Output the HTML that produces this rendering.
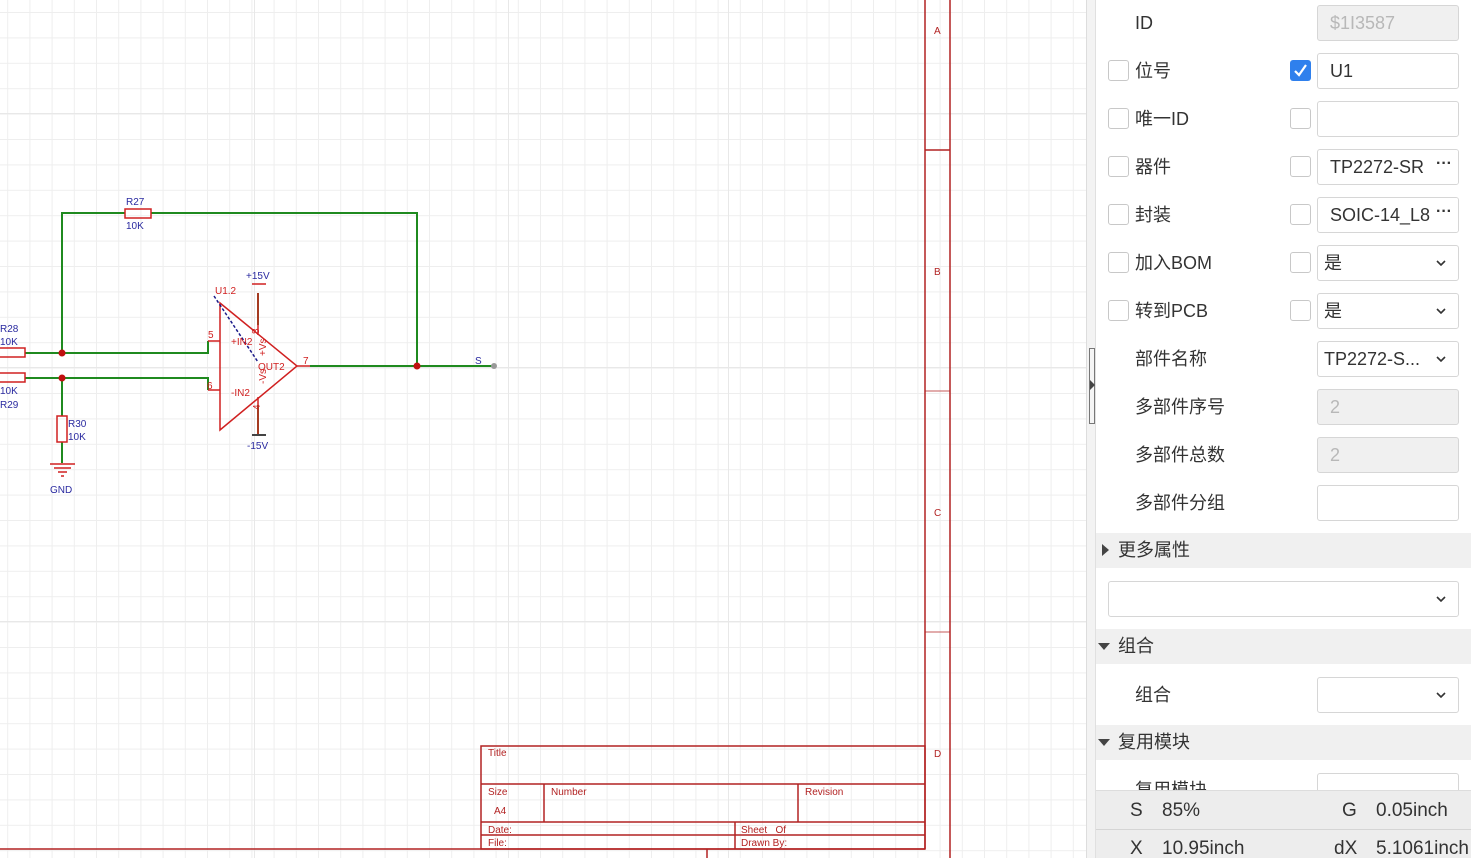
<!DOCTYPE html>
<html><head><meta charset="utf-8"><style>
*{margin:0;padding:0;box-sizing:border-box}
body{width:1471px;height:858px;overflow:hidden;position:relative;background:#fff;font-family:"Liberation Sans","Noto Sans CJK SC",sans-serif;color:#333}
.a{position:absolute}
.lbl{position:absolute;left:1135px;font-size:18px;line-height:24px;color:#333}
.cb{position:absolute;width:21px;height:21px;border:1px solid #c8c8c8;border-radius:3px;background:#fff}
.in{position:absolute;left:1317px;width:142px;height:36px;border:1px solid #d6d6d6;border-radius:3px;background:#fff;font-size:18px;line-height:34px;padding-left:12px;color:#333;white-space:nowrap;overflow:hidden}
.dis{background:#f0f0f0;color:#b8b8b8}
.chev{position:absolute;right:12px;top:14px;width:10px;height:6px}
.dots{position:absolute;right:0;top:0;width:28px;height:34px;background:#fff;font-size:16px;font-weight:bold;text-align:center;line-height:28px}
.band{position:absolute;left:1096px;width:375px;height:35px;background:#f0f0f0;font-size:18px;line-height:35px;padding-left:22px}
.tri{position:absolute;left:6px;top:12px;width:0;height:0}
.tr{border-top:6px solid transparent;border-bottom:6px solid transparent;border-left:7px solid #444;left:6px;top:11px}
.td{border-left:6px solid transparent;border-right:6px solid transparent;border-top:7px solid #444;left:2px;top:14px}
</style></head><body>
<svg width="0" height="0" style="position:absolute"><defs><symbol id="cv" viewBox="0 0 10 6"><path d="M1 1L5 5L9 1" stroke="#333" stroke-width="1.6" fill="none"/></symbol></defs></svg>
<svg class="a" style="left:0;top:0" width="1086" height="858" xmlns="http://www.w3.org/2000/svg" font-family="Liberation Sans, sans-serif">
<defs>
<pattern id="g" x="-15" y="12" width="22.2" height="25.4" patternUnits="userSpaceOnUse">
<path d="M0.5 0V25.4M0 0.5H22.2" stroke="#eeeeee" stroke-width="1" fill="none"/>
</pattern>
</defs>
<rect width="1086" height="858" fill="#fff"/>
<rect width="1086" height="858" fill="url(#g)"/>
<g stroke="#e8e8e8" stroke-width="1">
<line x1="254.5" y1="0" x2="254.5" y2="858"/><line x1="508.5" y1="0" x2="508.5" y2="858"/><line x1="728.5" y1="0" x2="728.5" y2="858"/>
<line x1="0" y1="113.5" x2="1086" y2="113.5"/><line x1="0" y1="367.5" x2="1086" y2="367.5"/><line x1="0" y1="621.5" x2="1086" y2="621.5"/>
</g>
<g stroke="#b22222" stroke-width="1.5" fill="none">
<line x1="925" y1="0" x2="925" y2="849"/><line x1="950" y1="0" x2="950" y2="858"/>
<line x1="925" y1="150" x2="950" y2="150"/><line x1="925" y1="391" x2="950" y2="391" stroke-width="0.8"/><line x1="925" y1="632" x2="950" y2="632" stroke-width="0.8"/>
<rect x="481" y="746" width="444" height="103"/>
<line x1="481" y1="784" x2="925" y2="784"/><line x1="481" y1="822" x2="925" y2="822"/><line x1="481" y1="835" x2="925" y2="835"/>
<line x1="544" y1="784" x2="544" y2="822"/><line x1="798" y1="784" x2="798" y2="822"/><line x1="735" y1="822" x2="735" y2="849"/>
<line x1="0" y1="849" x2="925" y2="849"/><line x1="707" y1="849" x2="707" y2="858"/>
</g>
<g fill="#b22222" font-size="10">
<text x="934" y="34">A</text><text x="934" y="275">B</text><text x="934" y="516">C</text><text x="934" y="757">D</text>
<text x="488" y="756">Title</text><text x="488" y="795">Size</text><text x="494" y="814">A4</text><text x="551" y="795">Number</text><text x="805" y="795">Revision</text>
<text x="488" y="833">Date:</text><text x="488" y="846">File:</text><text x="741" y="833">Sheet&#160;&#160;&#160;Of</text><text x="741" y="846">Drawn By:</text>
</g>
<g stroke="#1f8a1f" stroke-width="2" fill="none">
<polyline points="62,353 62,213 125,213"/><polyline points="151,213 417,213 417,366"/>
<polyline points="25,353 208,353 208,341"/><polyline points="25,378 208,378 208,390"/>
<line x1="62" y1="378" x2="62" y2="416"/><line x1="62" y1="442" x2="62" y2="463"/>
<line x1="310" y1="366" x2="493" y2="366"/>
<line x1="258" y1="293" x2="258" y2="325"/><line x1="258" y1="405" x2="258" y2="434"/>
</g>
<g stroke="#d02020" stroke-width="1.5" fill="none">
<rect x="125" y="209" width="26" height="9"/>
<rect x="-5" y="348" width="30" height="9"/><rect x="-5" y="373" width="30" height="9"/>
<rect x="57" y="416" width="10" height="26"/>
<polygon points="220,303 220,430 297,366"/>
<line x1="208" y1="341" x2="220" y2="341"/><line x1="208" y1="390" x2="220" y2="390"/>
<line x1="297" y1="366" x2="310" y2="366"/>
<line x1="258" y1="293" x2="258" y2="335"/><line x1="258" y1="397" x2="258" y2="434"/>
<line x1="252" y1="284" x2="266" y2="284"/>
</g>
<line x1="252" y1="435" x2="266" y2="435" stroke="#444" stroke-width="2"/>
<g stroke="#d02020" stroke-width="1.5"><line x1="50" y1="464" x2="75" y2="464"/><line x1="54" y1="468" x2="71" y2="468"/><line x1="58" y1="472" x2="67" y2="472"/><line x1="61" y1="476" x2="64" y2="476"/></g>
<line x1="214" y1="296" x2="258" y2="362" stroke="#1a1a8a" stroke-width="1.5" stroke-dasharray="3,2"/>
<g fill="#c01010"><circle cx="62" cy="353" r="3.5"/><circle cx="62" cy="378" r="3.5"/><circle cx="417" cy="366" r="3.5"/></g>
<circle cx="494" cy="366" r="3" fill="#999"/>
<g fill="#2a2aa0" font-size="10">
<text x="126" y="205">R27</text><text x="126" y="229">10K</text>
<text x="0" y="332">R28</text><text x="0" y="345">10K</text><text x="0" y="394">10K</text><text x="0" y="408">R29</text>
<text x="68" y="427">R30</text><text x="68" y="440">10K</text><text x="50" y="493">GND</text>
<text x="246" y="279">+15V</text><text x="247" y="449">-15V</text><text x="475" y="364">S</text>
</g>
<g fill="#d02020" font-size="10">
<text x="215" y="294">U1.2</text><text x="208" y="338">5</text><text x="207" y="389">6</text><text x="303" y="364">7</text>
<text x="231" y="345">+IN2</text><text x="231" y="396">-IN2</text><text x="258" y="370">OUT2</text>
<text x="252" y="333" transform="rotate(-90 256 330)">8</text><text x="252" y="410" transform="rotate(-90 256 406)">4</text>
<text x="262" y="360" transform="rotate(-90 262 356)">+Vs</text><text x="262" y="388" transform="rotate(-90 262 384)">-Vs</text>
</g>
</svg>
<div class="a" style="left:1086px;top:0;width:10px;height:858px;background:#f3f3f3;border-left:1px solid #ddd;border-right:1px solid #e0e0e0"></div>
<div class="a" style="left:1089px;top:348px;width:6px;height:76px;border:1px solid #777;background:#f5f5f5"></div>
<div class="a" style="left:1090px;top:380px;width:0;height:0;border-top:5px solid transparent;border-bottom:5px solid transparent;border-left:5px solid #444"></div>
<div class="a" style="left:1096px;top:0;width:375px;height:858px;background:#fff"></div>
<div class="lbl" style="top:11px">ID</div><div class="in dis" style="top:5px">$1I3587</div>
<div class="cb" style="left:1108px;top:60px"></div><div class="lbl" style="top:59px">位号</div>
<div class="a" style="left:1290px;top:60px;width:21px;height:21px;border-radius:3px;background:#2f80ed"><svg width="21" height="21"><path d="M5 11L9 15L16 5" stroke="#fff" stroke-width="2.2" fill="none"/></svg></div><div class="in" style="top:53px">U1</div>
<div class="cb" style="left:1108px;top:108px"></div><div class="lbl" style="top:107px">唯一ID</div><div class="cb" style="left:1290px;top:108px"></div><div class="in" style="top:101px"></div>
<div class="cb" style="left:1108px;top:156px"></div><div class="lbl" style="top:155px">器件</div><div class="cb" style="left:1290px;top:156px"></div><div class="in" style="top:149px">TP2272-SR<span class="dots">···</span></div>
<div class="cb" style="left:1108px;top:204px"></div><div class="lbl" style="top:203px">封装</div><div class="cb" style="left:1290px;top:204px"></div><div class="in" style="top:197px">SOIC-14_L8<span class="dots">···</span></div>
<div class="cb" style="left:1108px;top:252px"></div><div class="lbl" style="top:251px">加入BOM</div><div class="cb" style="left:1290px;top:252px"></div><div class="in" style="top:245px;padding-left:6px">是<svg class="chev"><use href="#cv"/></svg></div>
<div class="cb" style="left:1108px;top:300px"></div><div class="lbl" style="top:299px">转到PCB</div><div class="cb" style="left:1290px;top:300px"></div><div class="in" style="top:293px;padding-left:6px">是<svg class="chev"><use href="#cv"/></svg></div>
<div class="lbl" style="top:347px">部件名称</div><div class="in" style="top:341px;padding-left:6px">TP2272-S...<svg class="chev"><use href="#cv"/></svg></div>
<div class="lbl" style="top:395px">多部件序号</div><div class="in dis" style="top:389px">2</div>
<div class="lbl" style="top:443px">多部件总数</div><div class="in dis" style="top:437px">2</div>
<div class="lbl" style="top:491px">多部件分组</div><div class="in" style="top:485px"></div>
<div class="band" style="top:533px"><span class="a tr"></span>更多属性</div>
<div class="in" style="left:1108px;width:351px;top:581px"><svg class="chev"><use href="#cv"/></svg></div>
<div class="band" style="top:629px"><span class="a td"></span>组合</div>
<div class="lbl" style="top:683px">组合</div><div class="in" style="top:677px"><svg class="chev"><use href="#cv"/></svg></div>
<div class="band" style="top:725px"><span class="a td"></span>复用模块</div>
<div class="lbl" style="top:778px">复用模块</div><div class="in" style="top:773px"></div>
<div class="a" style="left:1096px;top:790px;width:375px;height:68px;background:#ededed;border-top:1px solid #ddd;font-size:19px;color:#333">
<div class="a" style="left:0;top:38px;width:375px;height:1px;background:#d5d5d5"></div>
<span class="a" style="left:34px;top:9px">S</span><span class="a" style="left:66px;top:9px">85%</span>
<span class="a" style="left:246px;top:9px">G</span><span class="a" style="left:280px;top:9px">0.05inch</span>
<span class="a" style="left:34px;top:47px">X</span><span class="a" style="left:66px;top:47px">10.95inch</span>
<span class="a" style="left:238px;top:47px">dX</span><span class="a" style="left:280px;top:47px">5.1061inch</span>
</div>
</body></html>
